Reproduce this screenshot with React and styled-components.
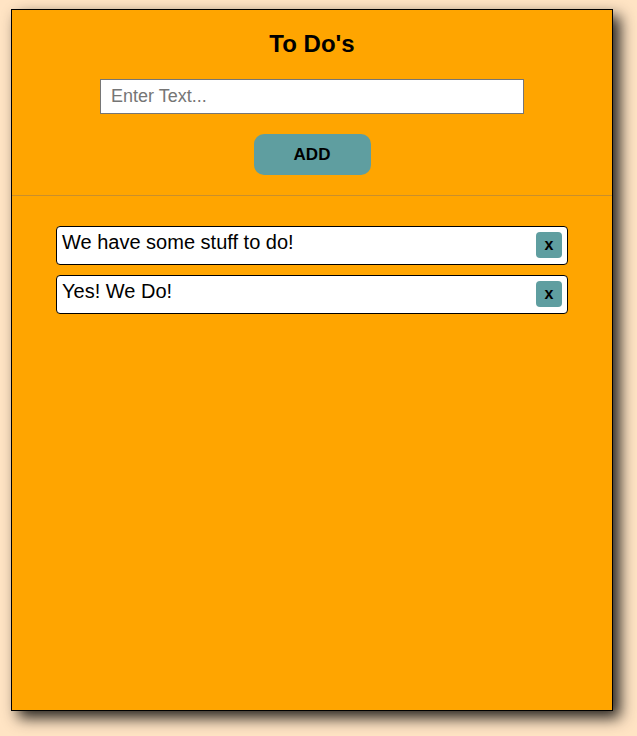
import React, { useState } from "react";
import styled, { createGlobalStyle } from "styled-components";

const GlobalStyle = createGlobalStyle`
  html, body {
    margin: 0;
    padding: 0;
    background: #ffe4c4;
    font-family: "Liberation Sans", Arial, sans-serif;
  }
`;

const Page = styled.div`
  padding: 9px 0 0 11px;
  height: 736px;
  box-sizing: border-box;
`;

const Panel = styled.div`
  width: 600px;
  height: 700px;
  background: #ffa500;
  border: 1px solid #000;
  box-shadow: 7px 7px 14px rgba(0, 0, 0, 0.85);
  display: flex;
  flex-direction: column;
`;

const Header = styled.div`
  display: flex;
  flex-direction: column;
  align-items: center;
  padding-top: 19px;
  padding-bottom: 20px;
  border-bottom: 1px solid #c98f2c;
`;

const Title = styled.h1`
  margin: 0;
  font-size: 24px;
  font-weight: bold;
  line-height: 30px;
  color: #000;
`;

const TextInput = styled.input`
  margin-top: 20px;
  width: 424px;
  height: 35px;
  box-sizing: border-box;
  border: 1px solid #767676;
  padding: 0 10px;
  font-family: "Liberation Sans", Arial, sans-serif;
  font-size: 18px;
  outline: none;

  &::placeholder {
    color: #757575;
  }
`;

const AddButton = styled.button`
  margin-top: 20px;
  width: 117px;
  height: 41px;
  border: none;
  border-radius: 10px;
  background: #5f9ea0;
  font-family: "Liberation Sans", Arial, sans-serif;
  font-size: 17px;
  font-weight: bold;
  color: #000;
`;

const List = styled.div`
  display: flex;
  flex-direction: column;
  gap: 10px;
  padding: 30px 44px 0 44px;
`;

const Item = styled.div`
  height: 39px;
  box-sizing: border-box;
  border: 1px solid #000;
  border-radius: 4px;
  background: #fff;
  display: flex;
  align-items: flex-start;
  justify-content: space-between;
  padding: 0 5px 0 5px;
`;

const ItemText = styled.span`
  font-size: 20px;
  line-height: 30px;
  color: #000;
`;

const RemoveButton = styled.button`
  margin-top: 5px;
  width: 26px;
  height: 26px;
  padding: 0;
  border: none;
  border-radius: 4px;
  background: #5f9ea0;
  font-family: "Liberation Sans", Arial, sans-serif;
  font-size: 16px;
  font-weight: bold;
  color: #000;
`;

function App() {
  const [todos, setTodos] = useState(["We have some stuff to do!", "Yes! We Do!"]);
  const [text, setText] = useState("");

  const add = () => {
    if (!text.trim()) return;
    setTodos([...todos, text]);
    setText("");
  };

  return (
    <Page>
      <GlobalStyle />
      <Panel>
        <Header>
          <Title>To Do's</Title>
          <TextInput
            placeholder="Enter Text..."
            value={text}
            onChange={(e) => setText(e.target.value)}
          />
          <AddButton onClick={add}>ADD</AddButton>
        </Header>
        <List>
          {todos.map((todo, index) => (
            <Item key={index}>
              <ItemText>{todo}</ItemText>
              <RemoveButton onClick={() => setTodos(todos.filter((_, i) => i !== index))}>
                x
              </RemoveButton>
            </Item>
          ))}
        </List>
      </Panel>
    </Page>
  );
}

export default App;
